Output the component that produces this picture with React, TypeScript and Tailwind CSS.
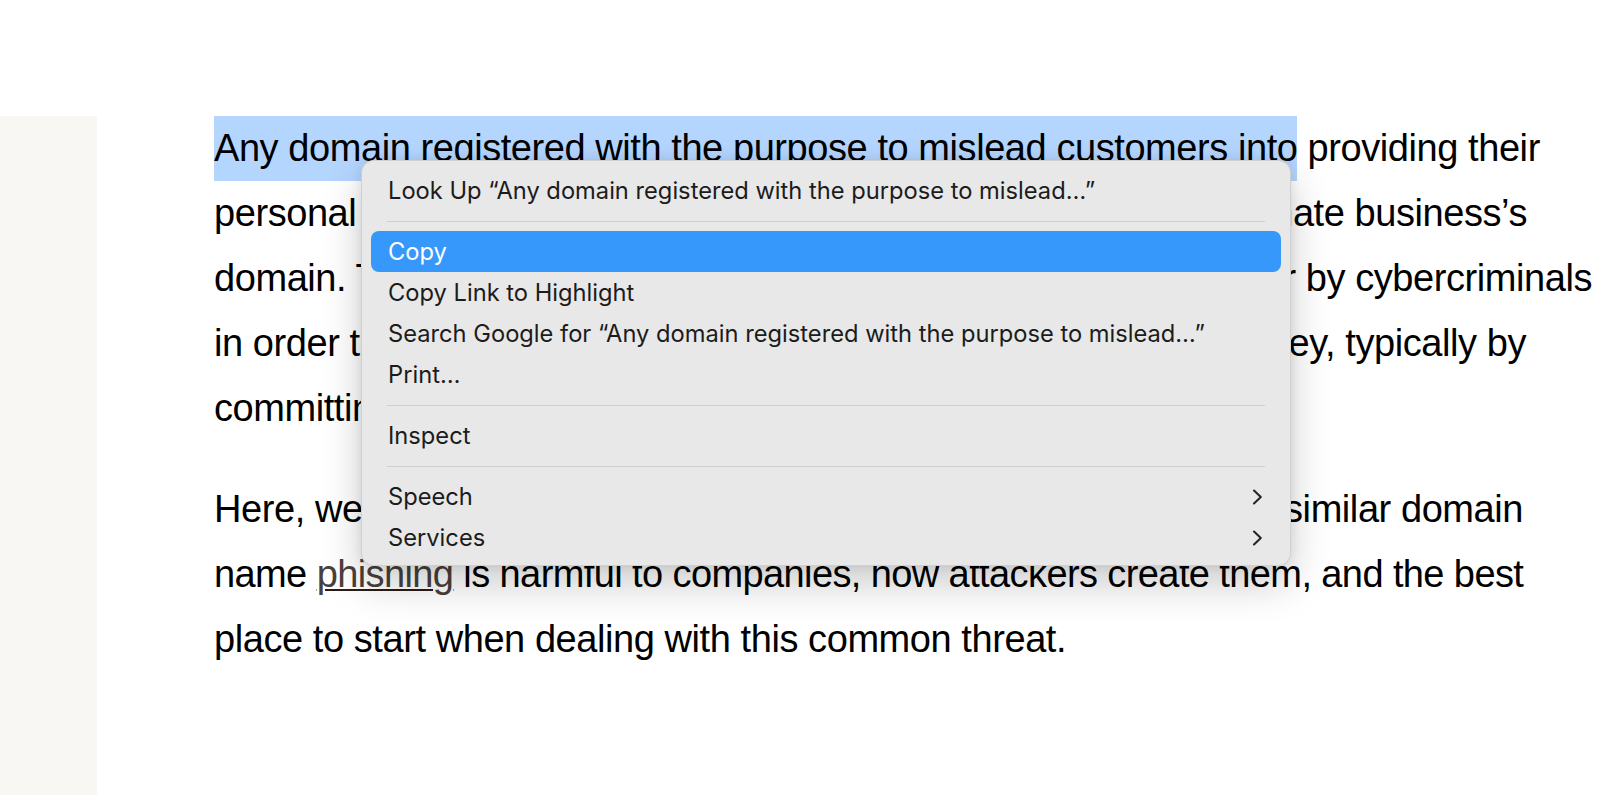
import React from "react";

function Chevron() {
  return (
    <svg width="12" height="16" viewBox="0 0 12 16" fill="none" className="shrink-0">
      <path d="M2 1.5 L8.8 8 L2 14.5" stroke="#262626" strokeWidth="2.1" strokeLinecap="round" strokeLinejoin="round" />
    </svg>
  );
}

function Item({ children, active, sub }: { children: React.ReactNode; active?: boolean; sub?: boolean }) {
  return (
    <div
      className={
        "mx-[9px] h-[41px] pl-[17px] pr-[17px] flex items-center justify-between rounded-[8px] whitespace-nowrap " +
        (active ? "bg-[#3598fa] text-white" : "")
      }
    >
      <span>{children}</span>
      {sub ? <Chevron /> : null}
    </div>
  );
}

function Sep() {
  return (
    <div className="h-[20px] mx-[25px] flex items-center">
      <div className="h-px w-full bg-[#cfcfcf]" />
    </div>
  );
}

export default function App() {
  return (
    <div className="relative h-[795px] w-[1600px] overflow-hidden bg-white">
      <div className="flex h-full pt-[116px]">
        <aside className="w-[97px] shrink-0 bg-[#f8f7f3]" />
        <article className="pl-[117px] text-[38px] leading-[65px] tracking-[-0.43px] text-black font-['Liberation_Sans',Arial,sans-serif]">
          <div className="whitespace-nowrap">
            <div className="h-[65px]">
              <span className="inline-block bg-[#b4d5fe]">Any domain registered with the purpose to mislead customers into</span> providing their
            </div>
            <div className="h-[65px] w-[1313px] flex justify-between">
              <span>personal</span>
              <span>a legitimate business’s</span>
            </div>
            <div className="h-[65px] w-[1378px] flex justify-between">
              <span>domain. These</span>
              <span>vector by cybercriminals</span>
            </div>
            <div className="h-[65px] w-[1312px] flex justify-between">
              <span>in order to</span>
              <span>money, typically by</span>
            </div>
            <div className="h-[65px]">committing</div>
          </div>
          <div className="mt-[36px] whitespace-nowrap">
            <div className="h-[65px] w-[1309px] flex justify-between">
              <span>Here, we’ll</span>
              <span>why similar domain</span>
            </div>
            <div className="h-[65px] tracking-[-0.6px]">
              name{" "}
              <a className="text-[#4a3f3b] underline decoration-[#2b1b15] decoration-2 underline-offset-[2px]">phishing</a>{" "}
              is harmful to companies, how attackers create them, and the best
            </div>
            <div className="h-[65px]">place to start when dealing with this common threat.</div>
          </div>
        </article>
      </div>

      <div className="absolute left-[361px] top-[160px] w-[930px] rounded-[13px] border border-black/10 bg-[#e8e8e8] pt-[9px] pb-[7px] text-[23.7px] leading-none text-[#1c1c1c] font-['Inter',sans-serif] shadow-[0_18px_40px_rgba(0,0,0,0.2),0_0_12px_rgba(0,0,0,0.08)]">
        <Item>Look Up “Any domain registered with the purpose to mislead…”</Item>
        <Sep />
        <Item active>Copy</Item>
        <Item>Copy Link to Highlight</Item>
        <Item>Search Google for “Any domain registered with the purpose to mislead…”</Item>
        <Item>Print…</Item>
        <Sep />
        <Item>Inspect</Item>
        <Sep />
        <Item sub>Speech</Item>
        <Item sub>Services</Item>
      </div>
    </div>
  );
}
